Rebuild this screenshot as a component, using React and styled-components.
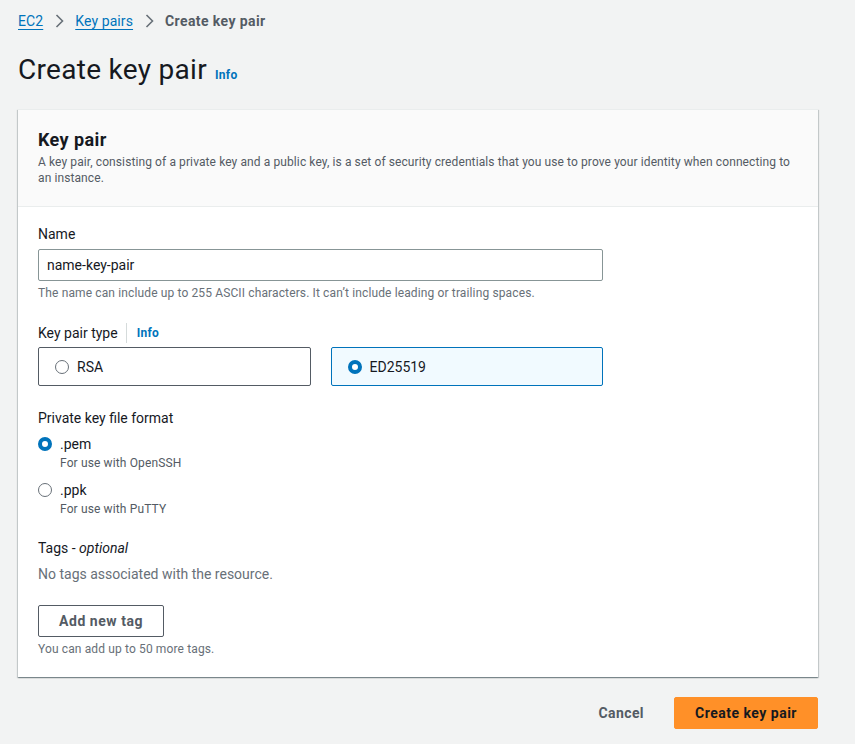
import React from "react";
import styled, { createGlobalStyle } from "styled-components";

const Global = createGlobalStyle`
  * { box-sizing: border-box; }
  html, body { margin: 0; padding: 0; }
  body {
    background: #f2f3f3;
    font-family: Roboto, "Liberation Sans", Arial, sans-serif;
    font-size: 14px;
    line-height: 20px;
    color: #16191f;
  }
`;

const Page = styled.div`
  padding: 11px 0 20px 18px;
  width: 819px;
`;

const Breadcrumbs = styled.nav`
  display: flex;
  align-items: center;
  gap: 8px;
  height: 20px;
`;

const Crumb = styled.a`
  color: #0073bb;
  text-decoration: underline;
  text-underline-offset: 3px;
  font-size: 14px;
  letter-spacing: 0.1px;
`;

const CurrentCrumb = styled.span`
  color: #545b64;
  font-weight: 700;
  font-size: 14px;
  letter-spacing: 0.4px;
`;

const Chevron = styled.svg`
  width: 16px;
  height: 16px;
  flex: none;
`;

const TitleRow = styled.div`
  display: flex;
  align-items: baseline;
  gap: 8px;
  margin-top: 21px;
`;

const Title = styled.h1`
  margin: 0;
  font-size: 28px;
  line-height: 36px;
  font-weight: 400;
  letter-spacing: 0.3px;
  color: #16191f;
`;

const InfoLink = styled.a`
  color: #0073bb;
  font-size: 12px;
  font-weight: 700;
  line-height: 16px;
  letter-spacing: 0.3px;
  text-decoration: none;
`;

const Panel = styled.section`
  margin-top: 21px;
  width: 800px;
  background: #fff;
  border-top: 1px solid #eaeded;
  box-shadow: 0 1px 1px 0 rgba(0, 28, 36, 0.3),
    1px 1px 1px 0 rgba(0, 28, 36, 0.15), -1px 1px 1px 0 rgba(0, 28, 36, 0.15);
`;

const PanelHeader = styled.header`
  background: #fafafa;
  border-bottom: 1px solid #eaeded;
  padding: 19px 20px 20px;
`;

const PanelTitle = styled.h2`
  margin: 0;
  font-size: 18px;
  line-height: 22px;
  font-weight: 700;
  letter-spacing: 0.4px;
`;

const PanelDesc = styled.p`
  margin: 3px 0 0;
  font-size: 12px;
  line-height: 16px;
  letter-spacing: 0.1px;
  color: #545b64;
`;

const PanelBody = styled.div`
  padding: 17px 20px 20px;
  display: flex;
  flex-direction: column;
`;

const Field = styled.div`
  width: 565px;
  margin-top: ${(p) => p.$mt || 0}px;
`;

const Label = styled.div`
  display: flex;
  align-items: center;
  font-size: 14px;
  line-height: 20px;
  color: #16191f;
  margin-bottom: ${(p) => p.$mb ?? 4}px;
`;

const Divider = styled.span`
  width: 1px;
  height: 20px;
  background: #d5dbdb;
  margin: 0 10px 0 8px;
`;

const TextInput = styled.input`
  display: block;
  width: 565px;
  height: 32px;
  margin-top: 5px;
  border: 1px solid #879596;
  border-radius: 2px;
  padding: 4px 8px;
  font: inherit;
  font-size: 14px;
  color: #16191f;
  background: #fff;
  outline: none;
`;

const Hint = styled.div`
  font-size: 12px;
  line-height: 16px;
  letter-spacing: 0.13px;
  color: #687078;
  margin-top: 4px;
`;

const Tiles = styled.div`
  display: grid;
  grid-template-columns: 1fr 1fr;
  gap: 20px;
`;

const Tile = styled.label`
  display: flex;
  align-items: center;
  gap: 8px;
  height: 39px;
  padding: 0 16px;
  border: 1px solid ${(p) => (p.$selected ? "#0073bb" : "#545b64")};
  background: ${(p) => (p.$selected ? "#f1faff" : "#fff")};
  border-radius: 2px;
  font-size: 14px;
`;

const RadioDot = styled.span`
  flex: none;
  width: 14px;
  height: 14px;
  border-radius: 50%;
  ${(p) =>
    p.$checked
      ? `border: 4px solid #0073bb; background: #fff;`
      : `border: 1px solid #687078; background: #fff;`}
`;

const RadioGroup = styled.div`
  display: flex;
  flex-direction: column;
  gap: 9px;
  margin-top: 6px;
`;

const RadioItem = styled.div`
  display: grid;
  grid-template-columns: 14px 1fr;
  column-gap: 8px;
  align-items: center;
`;

const RadioLabel = styled.span`
  font-size: 14px;
  line-height: 20px;
`;

const RadioDesc = styled.span`
  grid-column: 2;
  font-size: 12px;
  line-height: 16px;
  letter-spacing: 0.13px;
  color: #545b64;
  margin-top: 1px;
`;

const Muted = styled.div`
  color: #687078;
  font-size: 14px;
  line-height: 20px;
  margin-top: 6px;
`;

const OutlineButton = styled.button`
  margin-top: 21px;
  height: 32px;
  padding: 0 20px;
  border: 1px solid #545b64;
  border-radius: 2px;
  background: #fff;
  color: #545b64;
  font: inherit;
  font-weight: 700;
  font-size: 14px;
  letter-spacing: 0.55px;
  align-self: flex-start;
  cursor: pointer;
`;

const Footer = styled.div`
  width: 800px;
  display: flex;
  justify-content: flex-end;
  align-items: center;
  gap: 10px;
  margin-top: 20px;
`;

const LinkButton = styled.button`
  background: none;
  border: none;
  padding: 6px 20px;
  font: inherit;
  font-weight: 700;
  letter-spacing: 0.4px;
  color: #545b64;
  cursor: pointer;
`;

const PrimaryButton = styled.button`
  height: 32px;
  padding: 0 20px;
  background: #ff9028;
  border: 1px solid #ff9028;
  border-radius: 2px;
  font: inherit;
  font-weight: 700;
  letter-spacing: 0.5px;
  color: #16191f;
  cursor: pointer;
`;

const ChevronIcon = () => (
  <Chevron viewBox="0 0 16 16">
    <path d="M5.5 2l6 6-6 6" fill="none" stroke="#687078" strokeWidth="1.6" />
  </Chevron>
);

export default function App() {
  return (
    <>
      <Global />
      <Page>
        <Breadcrumbs>
          <Crumb href="#">EC2</Crumb>
          <ChevronIcon />
          <Crumb href="#">Key pairs</Crumb>
          <ChevronIcon />
          <CurrentCrumb>Create key pair</CurrentCrumb>
        </Breadcrumbs>
        <TitleRow>
          <Title>Create key pair</Title>
          <InfoLink href="#">Info</InfoLink>
        </TitleRow>

        <Panel>
          <PanelHeader>
            <PanelTitle>Key pair</PanelTitle>
            <PanelDesc>
              A key pair, consisting of a private key and a public key, is a set of
              security credentials that you use to prove your identity when connecting
              to an instance.
            </PanelDesc>
          </PanelHeader>
          <PanelBody>
            <Field>
              <Label $mb={0}>Name</Label>
              <TextInput defaultValue="name-key-pair" />
              <Hint>
                The name can include up to 255 ASCII characters. It can’t include leading
                or trailing spaces.
              </Hint>
            </Field>

            <Field $mt={22}>
              <Label>
                Key pair type
                <Divider />
                <InfoLink href="#">Info</InfoLink>
              </Label>
              <Tiles>
                <Tile>
                  <RadioDot />
                  RSA
                </Tile>
                <Tile $selected>
                  <RadioDot $checked />
                  ED25519
                </Tile>
              </Tiles>
            </Field>

            <Field $mt={22}>
              <Label $mb={0}>Private key file format</Label>
              <RadioGroup>
                <RadioItem>
                  <RadioDot $checked />
                  <RadioLabel>.pem</RadioLabel>
                  <RadioDesc>For use with OpenSSH</RadioDesc>
                </RadioItem>
                <RadioItem>
                  <RadioDot />
                  <RadioLabel>.ppk</RadioLabel>
                  <RadioDesc>For use with PuTTY</RadioDesc>
                </RadioItem>
              </RadioGroup>
            </Field>

            <Field $mt={21}>
              <Label $mb={0}>
                Tags -&nbsp;<i>optional</i>
              </Label>
              <Muted>No tags associated with the resource.</Muted>
            </Field>
            <OutlineButton>Add new tag</OutlineButton>
            <Hint>You can add up to 50 more tags.</Hint>
          </PanelBody>
        </Panel>

        <Footer>
          <LinkButton>Cancel</LinkButton>
          <PrimaryButton>Create key pair</PrimaryButton>
        </Footer>
      </Page>
    </>
  );
}
